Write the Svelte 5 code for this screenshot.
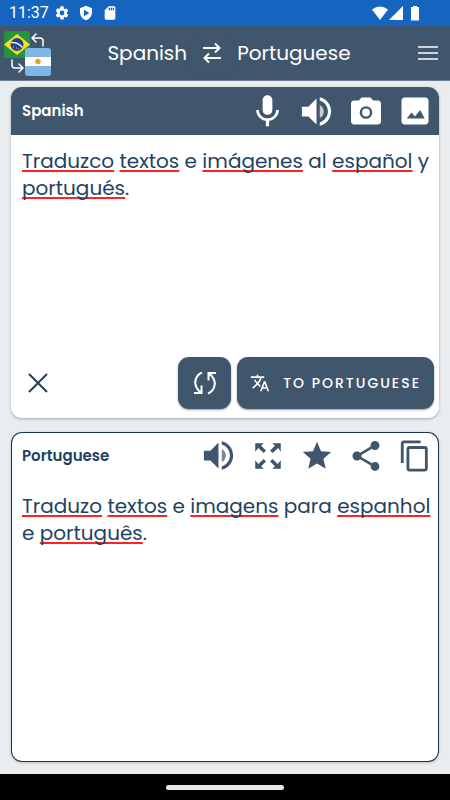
<script lang="ts">
	type Piece = { text: string; flagged?: boolean };

	let source = $state('Traduzco textos e imágenes al español y portugués.');
	let from = $state('Spanish');
	let to = $state('Portuguese');

	const result = 'Traduzo textos e imagens para espanhol e português.';
	const known = ['e', 'al', 'y', 'para'];

	function pieces(text: string): Piece[] {
		return text.split(/([\p{L}]+)/u).map((t) => ({
			text: t,
			flagged: /\p{L}/u.test(t) && !known.includes(t.toLowerCase()),
		}));
	}

	const icons: Record<string, { size: number; path: string; soft?: string }> = {
		mic: {
			size: 39,
			path: 'M12 14c1.66 0 2.99-1.34 2.99-3L15 5c0-1.66-1.34-3-3-3S9 3.34 9 5v6c0 1.66 1.34 3 3 3zm5.3-3c0 3-2.54 5.1-5.3 5.1S6.7 14 6.7 11H5c0 3.41 2.72 6.23 6 6.72V21h2v-3.28c3.28-.48 6-3.3 6-6.72h-1.7z',
		},
		speaker: {
			size: 39,
			path: 'M3 9v6h4l5 5V4L7 9H3zM14 3.23v2.06c2.89.86 5 3.54 5 6.71s-2.11 5.85-5 6.71v2.06c4.01-.91 7-4.49 7-8.77s-2.99-7.86-7-8.77z',
			soft: 'M16.5 12c0-1.77-1.02-3.29-2.5-4.03v8.05c1.48-.73 2.5-2.25 2.5-4.02z',
		},
		camera: {
			size: 36,
			path: 'M9 3 7.17 5H4c-1.1 0-2 .9-2 2v12c0 1.1.9 2 2 2h16c1.1 0 2-.9 2-2V7c0-1.1-.9-2-2-2h-3.17L15 3H9zm3 14.2a4.2 4.2 0 1 1 0-8.4 4.2 4.2 0 0 1 0 8.4zm0-1.6a2.6 2.6 0 1 0 0-5.2 2.6 2.6 0 0 0 0 5.2z',
		},
		image: {
			size: 36,
			path: 'M21 19V5c0-1.1-.9-2-2-2H5c-1.1 0-2 .9-2 2v14c0 1.1.9 2 2 2h14c1.1 0 2-.9 2-2zM6.5 17l3.2-4 2.3 2.7 3.4-4.4 3.1 5.7z',
		},
		expand: {
			size: 34,
			path: 'M3 3h6L7.2 4.800l3.400 3.400-1.700 1.700-3.700-3.500L3 9zM21 3v6l-1.800-2.600-4 3.500-1.700-1.700 3.400-3.400L15 3zM3 21v-6l2.200 2.600 3.700-3.500 1.700 1.700-3.400 3.400L9 21zM21 21h-6l1.900-1.800-3.400-3.400 1.700-1.700 3.600 3.500L21 15z',
		},
		star: {
			size: 34,
			path: 'M12 17.27 18.18 21l-1.64-7.03L22 9.24l-7.19-.61L12 2 9.19 8.63 2 9.24l5.46 4.73L5.82 21z',
		},
		share: {
			size: 36,
			path: 'M18 16.08c-.76 0-1.44.3-1.96.77L8.91 12.7c.05-.23.09-.46.09-.7s-.04-.47-.09-.7l7.05-4.11c.54.5 1.25.81 2.04.81 1.66 0 3-1.34 3-3s-1.34-3-3-3-3 1.34-3 3c0 .24.04.47.09.7L8.04 9.81C7.5 9.31 6.79 9 6 9c-1.66 0-3 1.34-3 3s1.34 3 3 3c.79 0 1.5-.31 2.04-.81l7.12 4.16c-.05.21-.08.43-.08.65 0 1.61 1.31 2.92 2.92 2.92s2.92-1.31 2.92-2.92-1.31-2.92-2.92-2.92z',
		},
		copy: {
			size: 34,
			path: 'M16 1H4c-1.1 0-2 .9-2 2v14h2V3h12V1zm3 4H8c-1.1 0-2 .9-2 2v14c0 1.1.9 2 2 2h11c1.1 0 2-.9 2-2V7c0-1.1-.9-2-2-2zm0 16H8V7h11v14z',
		},
	};

	const sourceTools = [
		{ icon: 'mic', label: 'Dictate' },
		{ icon: 'speaker', label: 'Listen' },
		{ icon: 'camera', label: 'Take photo' },
		{ icon: 'image', label: 'Open image' },
	];

	const resultTools = [
		{ icon: 'speaker', label: 'Listen' },
		{ icon: 'expand', label: 'Full screen' },
		{ icon: 'star', label: 'Favourite' },
		{ icon: 'share', label: 'Share' },
		{ icon: 'copy', label: 'Copy' },
	];

	function swap() {
		[from, to] = [to, from];
	}
</script>

{#snippet tool(t: { icon: string; label: string })}
	{@const icon = icons[t.icon]}
	<button class="tool" aria-label={t.label}>
		<svg width={icon.size} height={icon.size} viewBox="0 0 24 24" fill="currentColor">
			<path d={icon.path} />
			{#if icon.soft}<path d={icon.soft} opacity="0.7" />{/if}
		</svg>
	</button>
{/snippet}

{#snippet spelled(text: string)}
	{#each pieces(text) as p}{#if p.flagged}<span class="flagged">{p.text}</span>{:else}{p.text}{/if}{/each}
{/snippet}

<div class="app">
	<!-- System status bar -->
	<div class="status-bar">
		<span class="clock">11:37</span>
		<svg width="16" height="16" viewBox="0 0 24 24" fill="#fff">
			<path d="M19.14 12.94c.04-.3.06-.61.06-.94s-.02-.64-.07-.94l2.03-1.58a.49.49 0 0 0 .12-.61l-1.92-3.32a.49.49 0 0 0-.59-.22l-2.39.96a7 7 0 0 0-1.62-.94l-.36-2.54A.48.48 0 0 0 13.92 2h-3.84c-.24 0-.43.17-.47.41l-.36 2.54c-.59.24-1.13.57-1.62.94l-2.39-.96a.48.48 0 0 0-.59.22L2.74 8.87c-.12.21-.08.47.12.61l2.03 1.58c-.05.3-.09.63-.09.94s.02.64.07.94l-2.03 1.58a.49.49 0 0 0-.12.61l1.92 3.32c.12.22.37.29.59.22l2.39-.96c.5.38 1.03.7 1.62.94l.36 2.54c.05.24.24.41.48.41h3.84c.24 0 .44-.17.47-.41l.36-2.54a7 7 0 0 0 1.62-.94l2.39.96c.22.08.47 0 .59-.22l1.92-3.32a.49.49 0 0 0-.12-.61zM12 15.6a3.6 3.6 0 1 1 0-7.2 3.6 3.6 0 0 1 0 7.2z" />
		</svg>
		<svg width="16" height="16" viewBox="0 0 24 24" fill="#fff">
			<path fill-rule="evenodd" d="M12 1 3 5v6c0 5.5 3.8 10.7 9 12 5.2-1.3 9-6.5 9-12V5zM9 7v10l8-5z" />
		</svg>
		<svg width="16" height="16" viewBox="0 0 24 24" fill="#fff">
			<path d="M18 2h-8L4 8v12c0 1.100.9 2 2 2h12c1.100 0 2-.9 2-2V4c0-1.100-.9-2-2-2zm-6 6h-2V4h2zm3 0h-2V4h2zm3 0h-2V4h2z" />
		</svg>
		<svg class="signals" width="50" height="16" viewBox="0 0 50 16" fill="#fff">
			<path d="M0 4.5Q8-1.500 16 4.500L8 15z" />
			<path d="M31 1v14H17z" />
			<path d="M41 2V1h4v1h2v13q0 .5-.5.5h-7q-.5 0-.5-.5V2z" />
		</svg>
	</div>

	<header class="top-bar">
		<a class="logo" href="/" aria-label="Home">
			<svg width="48" height="48" viewBox="0 0 48 48">
				<rect x="0" y="2" width="26" height="27" rx="3" fill="#229444" />
				<path d="M0 15.5 13 5l13 10.500L13 26z" fill="#f8df1b" />
				<circle cx="13" cy="15.5" r="6.5" fill="#293f8c" />
				<path d="M7 13.5q7-.5 11.500 5" fill="none" stroke="#dfe8f5" stroke-width="1.5" />
				<path d="M9 18h1M12 19h1M14 20h1" stroke="#c4d2ee" />
				<rect x="21" y="19" width="26" height="28" rx="3" fill="#80b5e5" />
				<path d="M21 28h26v9H21z" fill="#fff" />
				<circle cx="34" cy="32.5" r="2.5" fill="#e89d28" />
				<path d="M34 29v7M30.500 32.500h7M31.500 30l5 5M36.500 30l-5 5" stroke="#e89d28" stroke-width=".7" />
				<g fill="none" stroke="#fff" stroke-width="1.5" stroke-linecap="round" stroke-linejoin="round">
					<path d="M39 17v-5q0-3-3-3h-8M32 5l-4 4 4 4" />
					<path d="M8 31v5q0 3 3 3h8M15 35l4 4-4 4" />
				</g>
			</svg>
		</a>
		<div class="languages">
			<button class="language">{from}</button>
			<button class="swap" aria-label="Swap languages" onclick={swap}>
				<svg width="18" height="22" viewBox="0 0 18 22" fill="none" stroke="#fff" stroke-width="2">
					<path d="M0 6h16.5M12 1.5 16.5 6 12 10.5M18 16H1.5M6 11.5 1.5 16 6 20.5" />
				</svg>
			</button>
			<button class="language">{to}</button>
		</div>
		<button class="menu" aria-label="Menu">
			<svg width="20" height="14" viewBox="0 0 20 14" stroke="#fff" stroke-width="1.5">
				<path d="M0 1h20M0 7h20M0 13h20" />
			</svg>
		</button>
	</header>

	<main>
		<!-- Source text -->
		<section class="card source">
			<div class="card-header">
				<label class="card-title" for="source-text">{from}</label>
				{#each sourceTools as t}{@render tool(t)}{/each}
			</div>
			<div class="editor">
				<div class="text marks" aria-hidden="true">{@render spelled(source)}</div>
				<textarea id="source-text" class="text" spellcheck="false" bind:value={source}></textarea>
			</div>
			<div class="actions">
				<button class="clear" aria-label="Clear" onclick={() => (source = '')}>
					<svg width="20" height="20" viewBox="0 0 20 20" stroke="currentColor" stroke-width="2">
						<path d="M1 1l18 18M19 1 1 19" />
					</svg>
				</button>
				<button class="action refresh" aria-label="Refresh">
					<svg width="24" height="24" viewBox="0 0 24 24" fill="none" stroke="currentColor" stroke-width="2">
						<path d="M9 1.5C3 4 .5 11 3.5 16.5Q5 19.5 8 21.500M1 22h7.500v-7.500" />
						<path d="M15 22.5C21 20 23.5 13 20.5 7.5Q19 4.5 16 2.500M23 2h-7.500v7.500" />
					</svg>
				</button>
				<button class="action translate">
					<svg width="20" height="20" viewBox="0 0 24 24" fill="currentColor">
						<path d="m12.87 15.07-2.54-2.51.03-.03A17.52 17.52 0 0 0 14.07 6H17V4h-7V2H8v2H1v1.99h11.17C11.5 7.92 10.44 9.75 9 11.35 8.07 10.32 7.3 9.19 6.69 8h-2c.73 1.63 1.73 3.17 2.98 4.56l-5.09 5.02L4 19l5-5 3.11 3.11zM18.5 10h-2L12 22h2l1.12-3h4.75L21 22h2zm-2.62 7 1.62-4.33L19.12 17z" />
					</svg>
					<span>To {to}</span>
				</button>
			</div>
		</section>

		<!-- Translation -->
		<section class="card result">
			<div class="card-header">
				<h2 class="card-title">{to}</h2>
				{#each resultTools as t}{@render tool(t)}{/each}
			</div>
			<p class="text">{@render spelled(result)}</p>
		</section>
	</main>

	<div class="nav-bar"><div class="handle"></div></div>
</div>

<style>
	:global(body) { margin: 0; background: #e9edf0; }
	.app { --slate: #3f566d; --ink: #1f4262; display: flex; flex-direction: column; min-height: 100vh; font-family: Poppins, Inter, "Liberation Sans", sans-serif; color: var(--ink); }
	button { font: inherit; color: inherit; background: none; border: 0; padding: 0; cursor: pointer; display: flex; align-items: center; justify-content: center; }
	svg { display: block; flex-shrink: 0; }

	/* System bars */
	.status-bar { display: flex; align-items: center; gap: 8px; height: 26px; padding: 0 28px 0 9px; background: #1565c0; color: #fff; }
	.clock { font: 16px/20px Roboto, sans-serif; width: 37px; }
	.signals { margin-left: auto; }
	.nav-bar { display: flex; align-items: center; justify-content: center; height: 26px; background: #000; }
	.handle { width: 118px; height: 5px; border-radius: 3px; background: #e6e6e6; }

	/* Header */
	.top-bar { display: flex; align-items: center; height: 54px; background: var(--slate); border-bottom: 1px solid #6b7c90; color: #fff; }
	.logo { padding-left: 4px; }
	.languages { flex: 1; display: flex; align-items: center; justify-content: center; }
	.language { font-size: 20px; line-height: 28px; font-weight: 400; }
	.swap { width: 50px; height: 50px; border-radius: 50%; box-shadow: 0 0 1px rgba(0, 0, 0, 0.1); }
	.menu { width: 44px; height: 44px; }

	/* Cards */
	main { flex: 1; display: flex; flex-direction: column; gap: 14px; padding: 6px 11px 12px; }
	.card { flex: 1 0 0; display: flex; flex-direction: column; box-sizing: border-box; border-radius: 11px; background: #fff; overflow: hidden; box-shadow: 0 1px 3px rgba(0, 0, 0, 0.3); }
	.card-header { display: flex; align-items: center; height: 48px; padding-left: 11px; }
	.card-title { flex: 1; margin: 0; font-size: 15px; line-height: 24px; font-weight: 600; }
	.tool { width: 49px; height: 48px; color: var(--slate); }
	.source .card-header { background: var(--slate); color: #fff; }
	.source .tool { color: #fff; }
	.result { box-shadow: inset 0 0 0 1px #1d3349, 0 1px 3px rgba(0, 0, 0, 0.2); }

	/* Text */
	.text { box-sizing: border-box; margin: 0; padding: 13px 4px 13px 11px; font: 400 20px/27px Poppins, Inter, "Liberation Sans", sans-serif; color: var(--ink); white-space: pre-wrap; overflow-wrap: break-word; }
	.flagged { text-decoration: underline 2px #ff2222; text-underline-offset: 2px; text-decoration-skip-ink: none; }
	.editor { flex: 1; display: grid; }
	.editor .text { grid-area: 1 / 1; width: 100%; }
	.marks { color: transparent; }
	textarea { border: 0; outline: 0; resize: none; background: none; overflow: hidden; }

	/* Actions */
	.actions { display: flex; align-items: center; gap: 6px; padding: 0 5px 9px; }
	.clear { width: 44px; height: 44px; margin-right: auto; color: var(--ink); }
	.action { height: 52px; border-radius: 11px; background: var(--slate); color: #fff; box-shadow: 0 1px 2px rgba(0, 0, 0, 0.4); }
	.refresh { width: 53px; }
	.translate { gap: 13px; padding: 0 13px; font-size: 14px; line-height: 20px; font-weight: 500; letter-spacing: 2px; text-transform: uppercase; }
</style>
